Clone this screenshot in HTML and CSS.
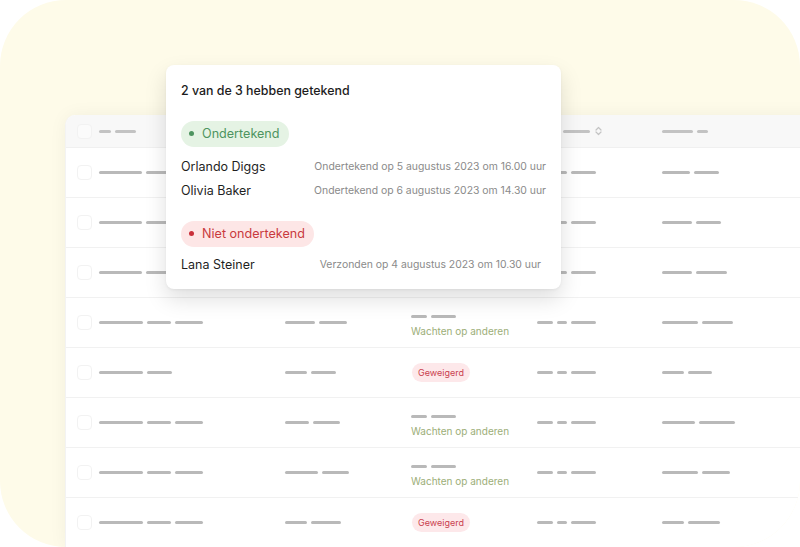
FILE: index.html
```html
<!DOCTYPE html>
<html lang="nl">
<head>
  <meta charset="UTF-8" />
  <meta name="viewport" content="width=device-width, initial-scale=1.0" />
  <title>Ondertekeningen</title>
  <link rel="stylesheet" href="styles.css">
</head>
<body>
  <div class="stage">
    <div class="table">
      <div class="row head">
        <div class="cell"><span class="check"></span></div>
        <div class="cell"><span class="bar" style="width:12px"></span><span class="bar" style="width:21px"></span></div>
        <div class="cell"></div>
        <div class="cell"></div>
        <div class="cell"><span class="bar" style="width:22px"></span><span class="bar" style="width:27px"></span>
          <svg class="sort" width="7" height="10" viewBox="0 0 7 10"><path d="M1 4 L3.5 1.5 L6 4 M1 6 L3.5 8.5 L6 6" fill="none" stroke="#c4c4c4" stroke-width="1.2" stroke-linecap="round" stroke-linejoin="round"/></svg>
        </div>
        <div class="cell"><span class="bar" style="width:31px"></span><span class="bar" style="width:11px"></span></div>
      </div>

      <div class="row">
        <div class="cell"><span class="check"></span></div>
        <div class="cell"><span class="bar" style="width:43px"></span><span class="bar" style="width:24px"></span><span class="bar" style="width:28px"></span></div>
        <div class="cell"><span class="bar" style="width:30px"></span><span class="bar" style="width:28px"></span></div>
        <div class="cell"></div>
        <div class="cell"><span class="bar" style="width:16px"></span><span class="bar" style="width:10px"></span><span class="bar" style="width:25px"></span></div>
        <div class="cell"><span class="bar" style="width:28px"></span><span class="bar" style="width:25px"></span></div>
      </div>

      <div class="row">
        <div class="cell"><span class="check"></span></div>
        <div class="cell"><span class="bar" style="width:43px"></span><span class="bar" style="width:24px"></span><span class="bar" style="width:28px"></span></div>
        <div class="cell"><span class="bar" style="width:30px"></span><span class="bar" style="width:28px"></span></div>
        <div class="cell"></div>
        <div class="cell"><span class="bar" style="width:16px"></span><span class="bar" style="width:10px"></span><span class="bar" style="width:25px"></span></div>
        <div class="cell"><span class="bar" style="width:30px"></span><span class="bar" style="width:25px"></span></div>
      </div>

      <div class="row">
        <div class="cell"><span class="check"></span></div>
        <div class="cell"><span class="bar" style="width:43px"></span><span class="bar" style="width:24px"></span><span class="bar" style="width:28px"></span></div>
        <div class="cell"><span class="bar" style="width:30px"></span><span class="bar" style="width:28px"></span></div>
        <div class="cell"></div>
        <div class="cell"><span class="bar" style="width:16px"></span><span class="bar" style="width:10px"></span><span class="bar" style="width:25px"></span></div>
        <div class="cell"><span class="bar" style="width:30px"></span><span class="bar" style="width:31px"></span></div>
      </div>

      <div class="row">
        <div class="cell"><span class="check"></span></div>
        <div class="cell"><span class="bar" style="width:44px"></span><span class="bar" style="width:24px"></span><span class="bar" style="width:28px"></span></div>
        <div class="cell"><span class="bar" style="width:30px"></span><span class="bar" style="width:28px"></span></div>
        <div class="cell status">
          <div><span class="bar" style="width:16px"></span><span class="bar" style="width:25px"></span></div>
          <div class="waiting">Wachten op anderen</div>
        </div>
        <div class="cell"><span class="bar" style="width:16px"></span><span class="bar" style="width:10px"></span><span class="bar" style="width:25px"></span></div>
        <div class="cell"><span class="bar" style="width:36px"></span><span class="bar" style="width:31px"></span></div>
      </div>

      <div class="row">
        <div class="cell"><span class="check"></span></div>
        <div class="cell"><span class="bar" style="width:44px"></span><span class="bar" style="width:25px"></span></div>
        <div class="cell"><span class="bar" style="width:22px"></span><span class="bar" style="width:25px"></span></div>
        <div class="cell"><span class="refused">Geweigerd</span></div>
        <div class="cell"><span class="bar" style="width:16px"></span><span class="bar" style="width:10px"></span><span class="bar" style="width:25px"></span></div>
        <div class="cell"><span class="bar" style="width:22px"></span><span class="bar" style="width:24px"></span></div>
      </div>

      <div class="row">
        <div class="cell"><span class="check"></span></div>
        <div class="cell"><span class="bar" style="width:44px"></span><span class="bar" style="width:24px"></span><span class="bar" style="width:28px"></span></div>
        <div class="cell"><span class="bar" style="width:24px"></span><span class="bar" style="width:27px"></span></div>
        <div class="cell status">
          <div><span class="bar" style="width:16px"></span><span class="bar" style="width:25px"></span></div>
          <div class="waiting">Wachten op anderen</div>
        </div>
        <div class="cell"><span class="bar" style="width:16px"></span><span class="bar" style="width:10px"></span><span class="bar" style="width:25px"></span></div>
        <div class="cell"><span class="bar" style="width:33px"></span><span class="bar" style="width:36px"></span></div>
      </div>

      <div class="row">
        <div class="cell"><span class="check"></span></div>
        <div class="cell"><span class="bar" style="width:44px"></span><span class="bar" style="width:24px"></span><span class="bar" style="width:28px"></span></div>
        <div class="cell"><span class="bar" style="width:33px"></span><span class="bar" style="width:27px"></span></div>
        <div class="cell status">
          <div><span class="bar" style="width:16px"></span><span class="bar" style="width:25px"></span></div>
          <div class="waiting">Wachten op anderen</div>
        </div>
        <div class="cell"><span class="bar" style="width:16px"></span><span class="bar" style="width:10px"></span><span class="bar" style="width:25px"></span></div>
        <div class="cell"><span class="bar" style="width:36px"></span><span class="bar" style="width:28px"></span></div>
      </div>

      <div class="row">
        <div class="cell"><span class="check"></span></div>
        <div class="cell"><span class="bar" style="width:44px"></span><span class="bar" style="width:24px"></span><span class="bar" style="width:28px"></span></div>
        <div class="cell"><span class="bar" style="width:22px"></span><span class="bar" style="width:30px"></span></div>
        <div class="cell"><span class="refused">Geweigerd</span></div>
        <div class="cell"><span class="bar" style="width:16px"></span><span class="bar" style="width:10px"></span><span class="bar" style="width:25px"></span></div>
        <div class="cell"><span class="bar" style="width:22px"></span><span class="bar" style="width:32px"></span></div>
      </div>
    </div>

    <div class="popover">
      <div class="pop-title">2 van de 3 hebben getekend</div>

      <span class="badge signed"><span class="dot"></span>Ondertekend</span>
      <div class="person"><span class="name">Orlando Diggs</span><span class="when">Ondertekend op 5 augustus 2023 om 16.00 uur</span></div>
      <div class="person"><span class="name">Olivia Baker</span><span class="when">Ondertekend op 6 augustus 2023 om 14.30 uur</span></div>

      <span class="badge unsigned"><span class="dot"></span>Niet ondertekend</span>
      <div class="person inset"><span class="name">Lana Steiner</span><span class="when">Verzonden op 4 augustus 2023 om 10.30 uur</span></div>
    </div>
  </div>
</body>
</html>
```

FILE: styles.css
```css
html, body { margin: 0; padding: 0; background: #fff; }
body { font-family: Inter, "Liberation Sans", sans-serif; color: #1f1f1f; }

.stage { position: relative; width: 800px; height: 547px; background: #fefbe9; border-radius: 66px; overflow: hidden; padding-top: 115px; box-sizing: border-box; }

.table { margin-left: 65px; width: 760px; background: #fff; border-radius: 10px 0 0 0; box-shadow: 0 0 18px rgba(0,0,0,0.05); border-left: 1px solid #f3f3f3; }
.row { display: grid; grid-template-columns: 22px 186px 126px 126px 125px 1fr; padding-left: 11px; height: 50px; border-bottom: 1px solid #f1f1f1; box-sizing: border-box; align-items: center; }
.row.head { height: 33px; background: #f8f8f8; border-bottom: 1px solid #f0f0f0; border-radius: 10px 0 0 0; }
.cell { display: flex; align-items: center; }

.check { width: 13px; height: 13px; border: 1px solid #f2f2f2; border-radius: 4px; background: #fff; }
.head .check { background: #fbfbfb; }
.bar { display: inline-block; height: 3px; border-radius: 2px; background: #b9b9b9; margin-right: 4px; }
.head .bar { background: #c3c3c3; }
.sort { margin-left: 1px; }

.status { flex-direction: column; align-items: flex-start; align-self: start; padding-top: 17px; gap: 7px; }
.status > div:first-child { display: flex; }
.waiting { font-size: 10px; line-height: 13px; color: #9cae78; }
.refused { font-size: 9px; line-height: 19px; padding: 0 6px; border-radius: 10px; background: #fde8ea; color: #c9404e; margin-left: 1px; }

.popover { position: absolute; left: 166px; top: 65px; width: 395px; height: 224px; box-sizing: border-box; background: #fff; border-radius: 8px; box-shadow: 0 10px 22px rgba(0,0,0,0.13), 0 1px 3px rgba(0,0,0,0.05); padding: 18px 15px 0 15px; }
.pop-title { font-size: 12.4px; font-weight: 500; line-height: 16px; color: #1c1c1c; margin-bottom: 21px; }

.badge { display: inline-flex; align-items: center; height: 26px; padding: 0 9px 0 8px; border-radius: 13px; font-size: 12.6px; margin-bottom: 8px; }
.badge .dot { width: 5px; height: 5px; border-radius: 50%; margin-right: 8px; }
.signed { background: #e5f3e4; color: #4e9460; }
.signed .dot { background: #4e9460; }
.unsigned { background: #fde6e6; color: #c93a3e; margin-top: 18px; margin-bottom: 6px; }
.unsigned .dot { background: #c9303a; }

.person { display: flex; justify-content: space-between; align-items: center; height: 24px; }
.person.inset { padding-right: 5px; }
.name { font-size: 12.5px; color: #1f1f1f; }
.when { font-size: 10.4px; color: #8a8a8a; }
```
